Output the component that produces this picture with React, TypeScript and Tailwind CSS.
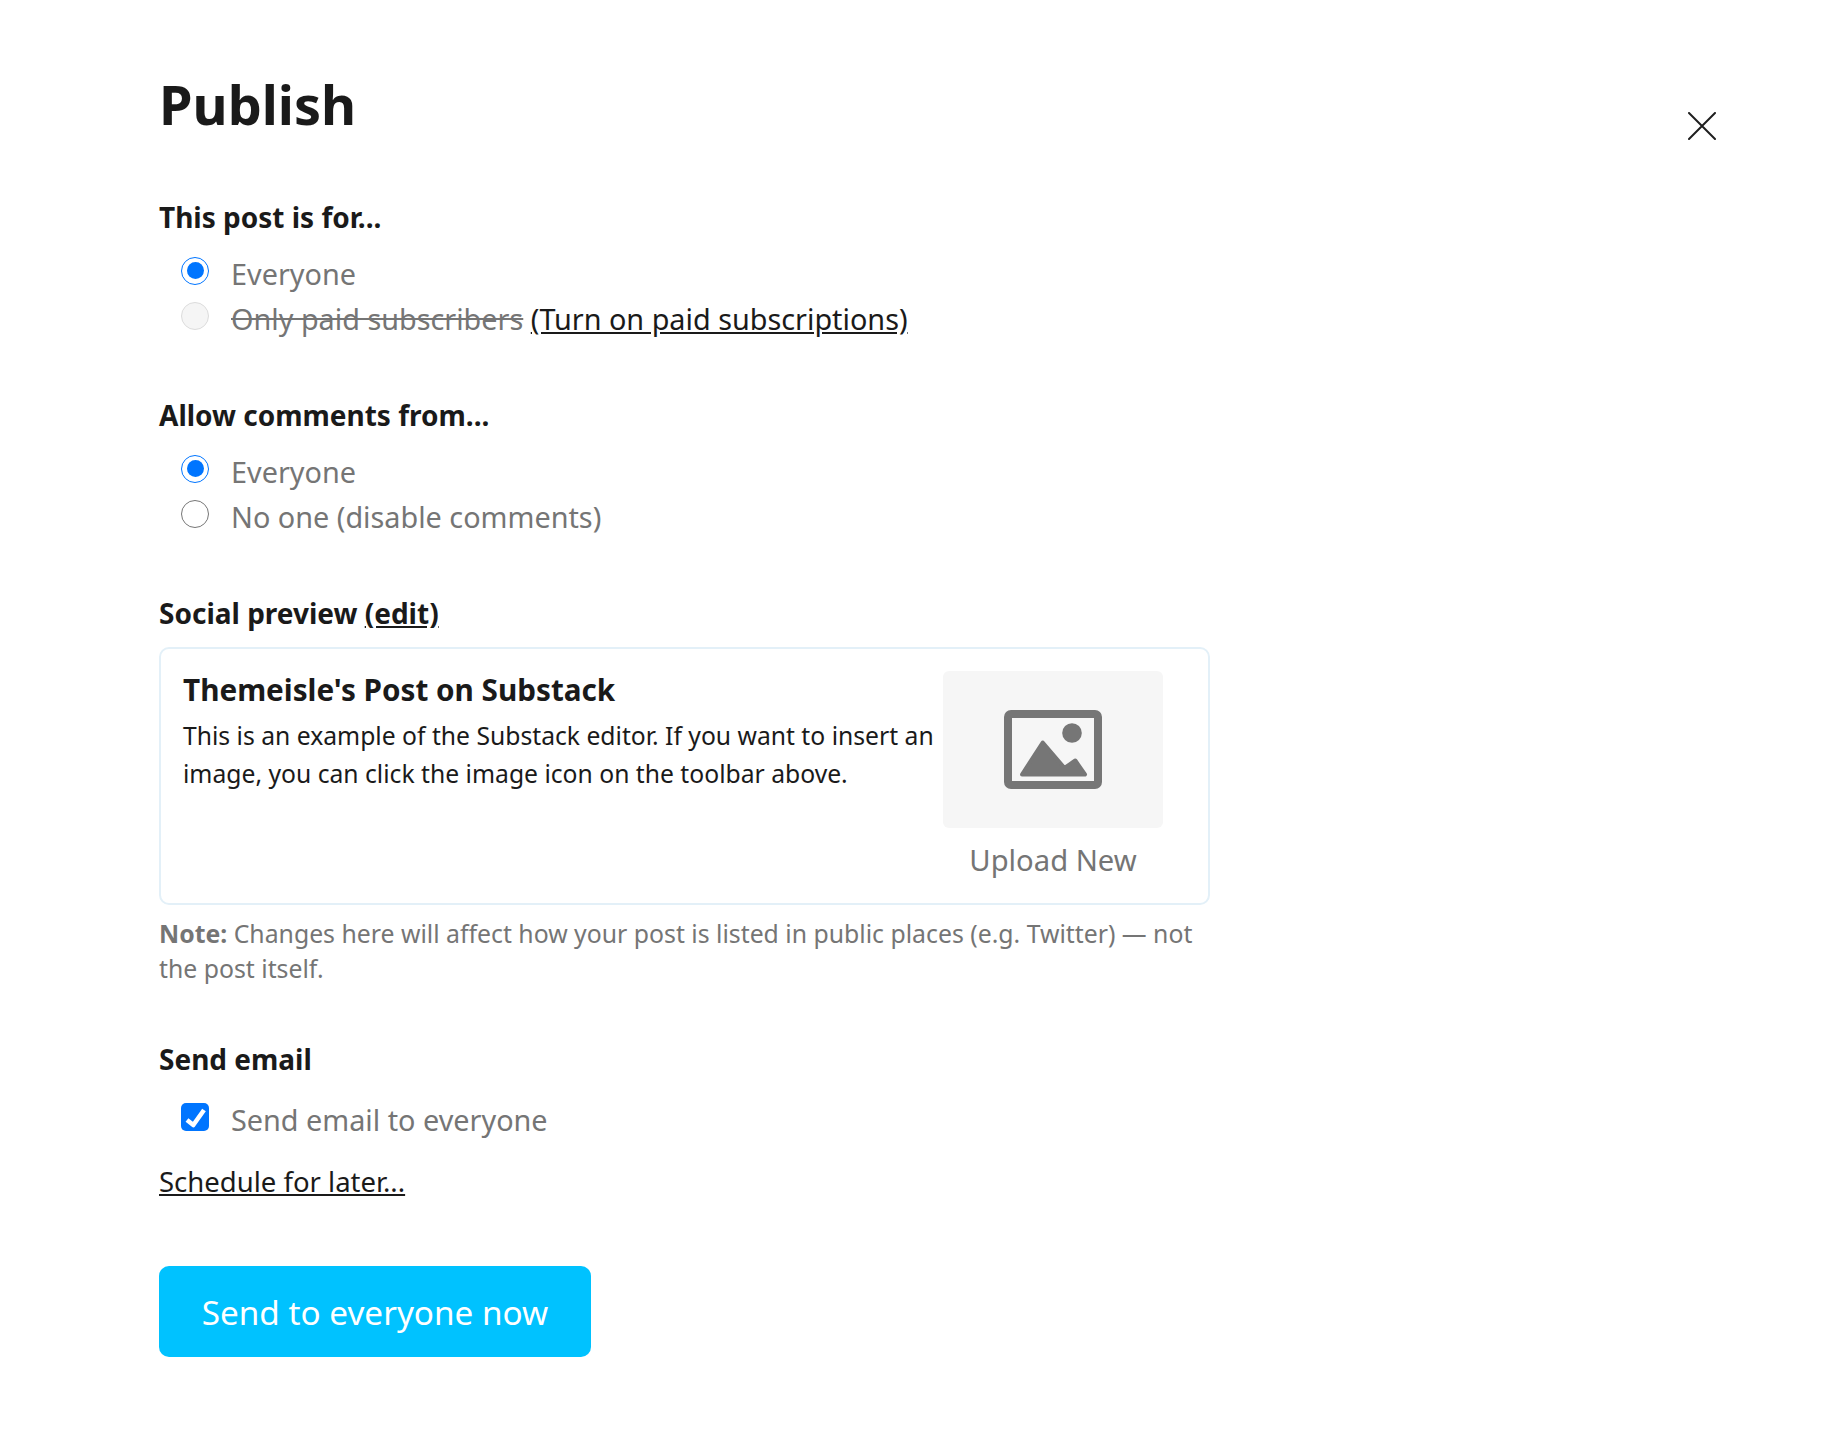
const font = 'font-["Noto_Sans",sans-serif]'

const Radio = ({ checked, disabled }: { checked?: boolean; disabled?: boolean }) => (
  <span
    className={
      'flex h-[28px] w-[28px] shrink-0 items-center justify-center rounded-full border ' +
      (checked
        ? 'border-[#0075ff] bg-white'
        : disabled
          ? 'border-[#dcdcdc] bg-[#f5f5f5]'
          : 'border-[#767676] bg-white')
    }
  >
    {checked && <span className="h-[17px] w-[17px] rounded-full bg-[#0075ff]" />}
  </span>
)

const Heading = ({ children, className }: { children: React.ReactNode; className: string }) => (
  <h3 className={'text-[28px] leading-[36px] font-bold text-[#1a1a1a] ' + className}>{children}</h3>
)

const Row = ({ children, control }: { children: React.ReactNode; control: React.ReactNode }) => (
  <div className="ml-[22px] flex h-[45px] items-center gap-[22px] text-[28.8px] text-[#757575]">
    <span className="-mt-[6px]">{control}</span>
    <span className="whitespace-nowrap">{children}</span>
  </div>
)

const ImageIcon = () => (
  <svg width="98" height="79" viewBox="0 0 98 79" fill="none">
    <rect x="4" y="4" width="90" height="71" rx="3" stroke="#767676" strokeWidth="8" />
    <circle cx="68" cy="23" r="9.8" fill="#767676" />
    <path
      d="M18 64.5 L38.7 32.5 L60.5 58 L71.3 50.5 L81 64.5 Z"
      fill="#767676"
      stroke="#767676"
      strokeWidth="4"
      strokeLinejoin="round"
    />
  </svg>
)

export default function App() {
  return (
    <div className={font + ' min-h-[1435px] bg-white pt-[69px] pr-[130px] pl-[159px]'}>
      <div className="flex items-start justify-between">
        <h1 className="text-[54px] leading-[70px] font-bold text-[#1a1a1a]">Publish</h1>
        <svg className="mt-[43px]" width="28" height="28" viewBox="0 0 28 28" fill="none">
          <path d="M1 1 L27 27 M27 1 L1 27" stroke="#1f1f1f" strokeWidth="2" strokeLinecap="round" />
        </svg>
      </div>

      <Heading className="mt-[59px]">This post is for...</Heading>
      <div className="mt-[16px]">
        <Row control={<Radio checked />}>Everyone</Row>
        <Row control={<Radio disabled />}>
          <span className="line-through">Only paid subscribers</span>{' '}
          <a className="text-[#1a1a1a] underline">(Turn on paid subscriptions)</a>
        </Row>
      </div>

      <Heading className="mt-[56px]">Allow comments from...</Heading>
      <div className="mt-[16px]">
        <Row control={<Radio checked />}>Everyone</Row>
        <Row control={<Radio />}>No one (disable comments)</Row>
      </div>

      <Heading className="mt-[56px]">
        Social preview <a className="underline">(edit)</a>
      </Heading>
      <div className="mt-[16px] flex h-[258px] w-[1051px] rounded-[10px] border-2 border-[#e3f0f8] pt-[22px] pr-[45px] pl-[22px]">
        <div className="min-w-0 flex-1">
          <div className="text-[29.7px] leading-[38px] font-bold text-[#1a1a1a]">
            Themeisle's Post on Substack
          </div>
          <p className="mt-[8px] text-[24.7px] leading-[38px] text-[#1a1a1a]">
            This is an example of the Substack editor. If you want to insert an image, you can
            click the image icon on the toolbar above.
          </p>
        </div>
        <div className="w-[220px] shrink-0">
          <div className="flex h-[157px] items-center justify-center rounded-[6px] bg-[#f6f6f6]">
            <ImageIcon />
          </div>
          <div className="mt-[13px] text-center text-[29.2px] leading-[38px] text-[#757575]">
            Upload New
          </div>
        </div>
      </div>
      <p className="mt-[11px] w-[1049px] text-[24.8px] leading-[35px] text-[#757575]">
        <b>Note:</b> Changes here will affect how your post is listed in public places (e.g.
        Twitter) — not the post itself.
      </p>

      <Heading className="mt-[55px]">Send email</Heading>
      <div className="mt-[20px]">
        <Row
          control={
            <span className="flex h-[28px] w-[28px] items-center justify-center rounded-[5px] bg-[#0075ff]">
              <svg width="28" height="28" viewBox="0 0 28 28" fill="none">
                <path d="M6 17 L12.3 22 L23 7" stroke="white" strokeWidth="4.5" strokeLinejoin="round" />
              </svg>
            </span>
          }
        >
          Send email to everyone
        </Row>
      </div>
      <a className="mt-[22px] block text-[27.5px] leading-[36px] text-[#1a1a1a] underline">
        Schedule for later...
      </a>

      <button className="mt-[66px] flex h-[91px] w-[432px] items-center justify-center rounded-[10px] bg-[#00c2ff] pt-[3px] text-[33.3px] text-white">
        Send to everyone now
      </button>
    </div>
  )
}
